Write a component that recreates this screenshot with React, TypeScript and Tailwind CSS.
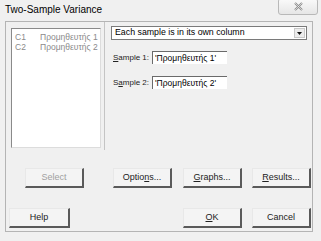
import React from "react";

const Btn = ({ children, w = "w-[59px]", disabled = false }: { children: React.ReactNode; w?: string; disabled?: boolean }) => (
  <div
    className={`${w} h-[20px] flex items-center justify-center text-[9px] whitespace-nowrap bg-[#f4f4f4] border-t border-l border-[#e8e8e8] border-r-2 border-b-2 border-r-[#5a5a5a] border-b-[#5a5a5a] ${disabled ? "text-[#a0a0a0]" : "text-[#222]"}`}
  >
    {children}
  </div>
);

export default function App() {
  return (
    <div
      className="w-[321px] h-[241px] bg-[#f0f0f0] overflow-hidden relative"
      style={{ fontFamily: '"Liberation Sans", Arial, sans-serif' }}
    >
      <div className="h-[21px] flex items-start">
        <div className="pl-[5px] pt-[4px] text-[10px] leading-[12px] text-black whitespace-nowrap">Two-Sample Variance</div>
        <div className="ml-auto mr-[3px] -mt-[2px] w-[40px] h-[17px] rounded-[3px] border border-[#b8b8b8] bg-gradient-to-b from-[#fafafa] to-[#e6e6e6] flex items-center justify-center">
          <svg width="9" height="9" viewBox="0 0 9 9">
            <path d="M1 1 L8 8 M8 1 L1 8" stroke="#8a8a8a" strokeWidth="2" fill="none" />
            <path d="M1 1 L8 8 M8 1 L1 8" stroke="#fff" strokeWidth="0.6" fill="none" />
          </svg>
        </div>
      </div>
      <div className="ml-[5px] mr-[8px] h-[211px] border border-[#b4b4b4] flex flex-col">
        <div className="flex h-[128px]">
          <div className="ml-[5px] mt-[6px] w-[90px] h-[120px] bg-white border border-[#8a8a8a] border-r-[#dcdcdc] border-b-[#dcdcdc] pt-[3px] text-[8.5px] leading-[10px] text-[#8a8a8a]">
            <div className="flex whitespace-nowrap"><span className="pl-[3px] w-[28px]">C1</span><span>Προμηθευτής 1</span></div>
            <div className="flex whitespace-nowrap"><span className="pl-[3px] w-[28px]">C2</span><span>Προμηθευτής 2</span></div>
          </div>
          <div className="ml-[3px] flex-1 border-l border-[#c4c4c4] flex flex-col">
            <div className="ml-[6px] mt-[4px] w-[196px] h-[14px] bg-white border border-[#7a7a7a] flex items-center">
              <span className="pl-[3px] text-[8.8px] text-black whitespace-nowrap">Each sample is in its own column</span>
              <div className="ml-auto mr-[1px] w-[11px] h-[10px] bg-[#ececec] border border-[#c8c8c8] flex items-center justify-center">
                <svg width="5" height="3" viewBox="0 0 5 3"><path d="M0 0 H5 L2.5 3 Z" fill="#111" /></svg>
              </div>
            </div>
            <div className="ml-[8px] mt-[11px] flex items-center h-[13px]">
              <span className="w-[39px] text-[8px] text-[#222] whitespace-nowrap"><u>S</u>ample 1:</span>
              <div className="w-[75px] h-[13px] bg-white border-t border-l border-[#6a6a6a] flex items-center pl-[2px] text-[8.5px] text-black whitespace-nowrap">'Προμηθευτής 1'</div>
            </div>
            <div className="ml-[8px] mt-[12px] flex items-center h-[13px]">
              <span className="w-[39px] text-[8px] text-[#222] whitespace-nowrap">S<u>a</u>mple 2:</span>
              <div className="w-[75px] h-[13px] bg-white border-t border-l border-[#6a6a6a] flex items-center pl-[2px] text-[8.5px] text-black whitespace-nowrap">'Προμηθευτής 2'</div>
            </div>
          </div>
        </div>
        <div className="flex mt-[18px]">
          <div className="ml-[19px]"><Btn disabled>Select</Btn></div>
          <div className="ml-[29px]"><Btn>Optio<u>n</u>s...</Btn></div>
          <div className="ml-[11px]"><Btn><u>G</u>raphs...</Btn></div>
          <div className="ml-[10px]"><Btn><u>R</u>esults...</Btn></div>
        </div>
        <div className="flex mt-[20px]">
          <div className="ml-[3px]"><Btn w="w-[61px]">Help</Btn></div>
          <div className="ml-[113px]"><Btn><u>O</u>K</Btn></div>
          <div className="ml-[10px]"><Btn>Cancel</Btn></div>
        </div>
      </div>
    </div>
  );
}
